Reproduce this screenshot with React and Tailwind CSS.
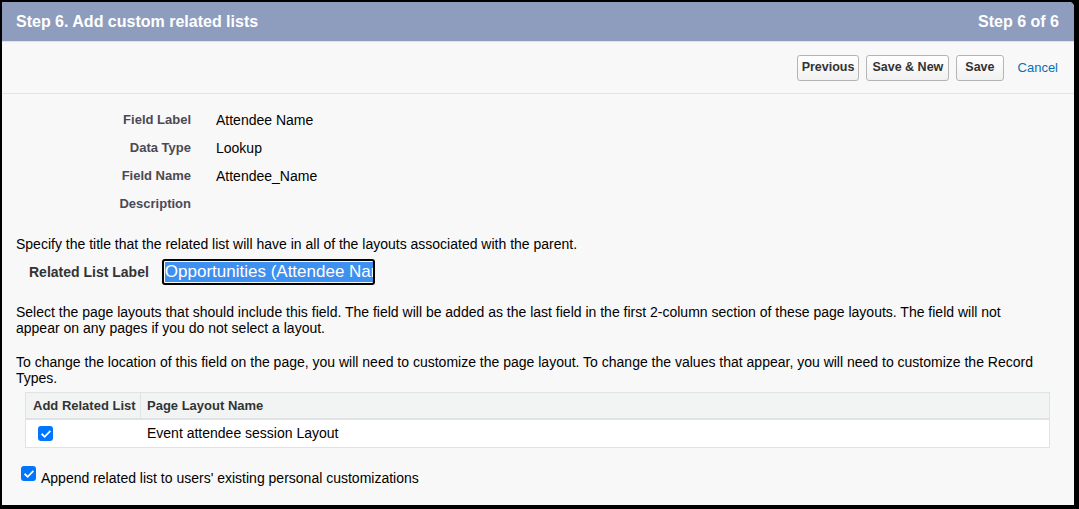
import React from "react";

const fields = [
  { label: "Field Label", value: "Attendee Name" },
  { label: "Data Type", value: "Lookup" },
  { label: "Field Name", value: "Attendee_Name" },
  { label: "Description", value: "" },
];

const Check = ({ className = "" }) => (
  <span
    className={`inline-flex items-center justify-center w-[15px] h-[15px] rounded-[3px] bg-[#0075ff] ${className}`}>
    <svg viewBox="0 0 16 16" className="w-[12px] h-[12px]" fill="none">
      <path
        d="M3 8.5l3.2 3.2L13 4.8"
        stroke="white"
        strokeWidth="2.4"
        strokeLinecap="square"
      />
    </svg>
  </span>
);

const Button = ({ children, className = "px-[5px]" }) => (
  <button
    className={`h-[26px] rounded-[3px] border border-[#b5b5b5] bg-gradient-to-b from-white to-[#f1f1f1] text-[12.5px] font-bold text-[#333] ${className}`}>
    {children}
  </button>
);

export default function App() {
  return (
    <div
      className="w-[1079px] h-[509px] bg-black pt-[2px] pl-[2px] pr-[5px] pb-[4px]"
      style={{ fontFamily: '"Liberation Sans", Arial, sans-serif' }}>
      <div className="h-full bg-[#f8f8f8] rounded-tr-[5px] overflow-hidden">
        {/* Header */}
        <div className="h-[40px] bg-[#8e9dbe] flex items-center justify-between pl-[14px] pr-[15px] text-white font-bold text-[16px] border-b border-[#dfe2e8]">
          <span>Step 6. Add custom related lists</span>
          <span>Step 6 of 6</span>
        </div>

        {/* Toolbar */}
        <div className="h-[52px] flex items-center justify-end gap-[7px] pr-[16px] border-b border-[#e3e3e3]">
          <Button className="px-[4px]">Previous</Button>
          <Button className="px-[5px]">Save &amp; New</Button>
          <Button className="px-[8px]">Save</Button>
          <a className="ml-[7px] text-[13px] text-[#0b6fb3]">Cancel</a>
        </div>

        {/* Field details */}
        <div className="pt-[12px]">
          {fields.map((f) => (
            <div key={f.label} className="h-[28px] flex items-center">
              <div className="w-[189px] text-right text-[13px] font-bold text-[#4a4a56]">
                {f.label}
              </div>
              <div className="ml-[25px] text-[14px] text-black">{f.value}</div>
            </div>
          ))}
        </div>

        <div className="pl-[14px] pr-[30px] text-[14px] text-black leading-[16px]">
          <p className="mt-[18px]">
            Specify the title that the related list will have in all of the
            layouts associated with the parent.
          </p>

          <div className="mt-[7px] flex items-center pl-[13px]">
            <span className="text-[14px] font-bold text-[#333]">
              Related List Label
            </span>
            <div className="ml-[13px] w-[213px] h-[26px] border-2 border-black rounded-[3px] px-[1px] flex items-center overflow-hidden">
              <span className="bg-[#3d8ff0] text-white text-[17px] leading-[20px] whitespace-nowrap">
                Opportunities (Attendee Name)
              </span>
            </div>
          </div>

          <p className="mt-[19px]">
            Select the page layouts that should include this field. The field
            will be added as the last field in the first 2-column section of
            these page layouts. The field will not appear on any pages if you
            do not select a layout.
          </p>

          <p className="mt-[18px]">
            To change the location of this field on the page, you will need to
            customize the page layout. To change the values that appear, you
            will need to customize the Record Types.
          </p>
        </div>

        {/* Layout table */}
        <div className="mt-[6px] ml-[23px] mr-[24px] border border-[#e0e3e5]">
          <div className="h-[27px] flex bg-[#f2f3f3] border-b-2 border-[#e0e3e5] text-[13px] font-bold text-[#333]">
            <div className="w-[115px] pl-[7px] flex items-center border-r border-[#e0e3e5]">
              Add Related List
            </div>
            <div className="pl-[6px] flex items-center">Page Layout Name</div>
          </div>
          <div className="h-[27px] flex items-center bg-white text-[14px] text-black">
            <div className="w-[115px] pl-[12px] flex items-center">
              <Check />
            </div>
            <div className="pl-[6px]">Event attendee session Layout</div>
          </div>
        </div>

        <div className="mt-[18px] ml-[19px] flex items-start gap-[5px]">
          <Check />
          <span className="text-[14px] text-black leading-[16px] mt-[4px]">
            Append related list to users' existing personal customizations
          </span>
        </div>
      </div>
    </div>
  );
}
